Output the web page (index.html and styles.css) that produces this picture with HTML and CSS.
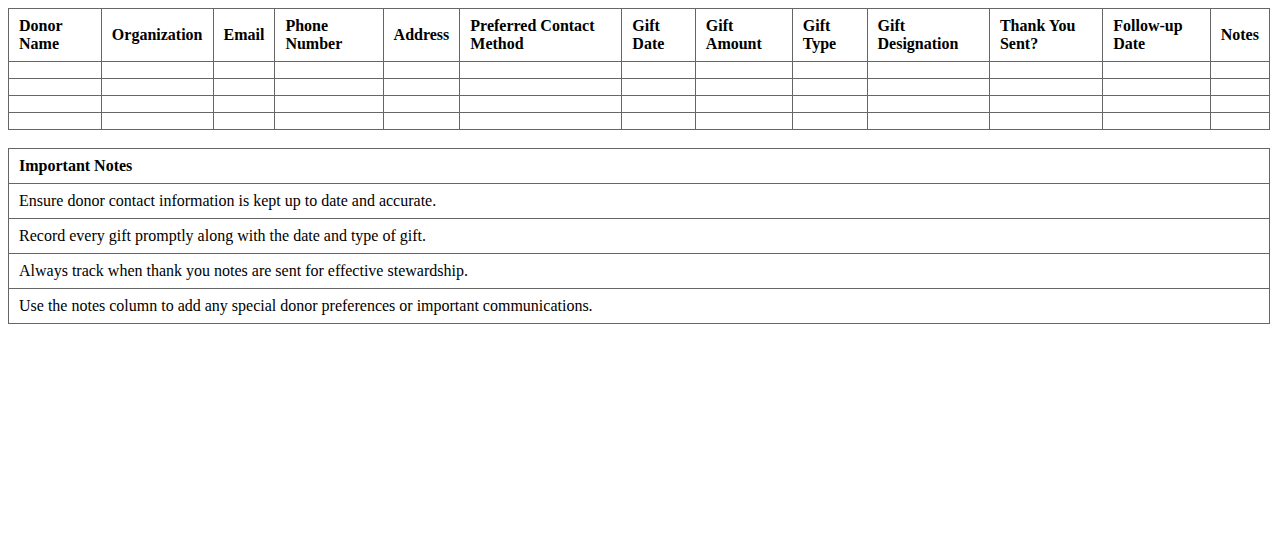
FILE: index.html
```html
<!DOCTYPE html>
<html>
<head>
<meta charset="utf-8">
<link rel="stylesheet" href="styles.css">
</head>
<body>
<table class="log">
  <thead>
    <tr>
      <th>Donor Name</th>
      <th>Organization</th>
      <th>Email</th>
      <th>Phone Number</th>
      <th>Address</th>
      <th>Preferred Contact Method</th>
      <th>Gift Date</th>
      <th>Gift Amount</th>
      <th>Gift Type</th>
      <th>Gift Designation</th>
      <th>Thank You Sent?</th>
      <th>Follow-up Date</th>
      <th>Notes</th>
    </tr>
  </thead>
  <tbody>
    <tr><td></td><td></td><td></td><td></td><td></td><td></td><td></td><td></td><td></td><td></td><td></td><td></td><td></td></tr>
    <tr><td></td><td></td><td></td><td></td><td></td><td></td><td></td><td></td><td></td><td></td><td></td><td></td><td></td></tr>
    <tr><td></td><td></td><td></td><td></td><td></td><td></td><td></td><td></td><td></td><td></td><td></td><td></td><td></td></tr>
    <tr><td></td><td></td><td></td><td></td><td></td><td></td><td></td><td></td><td></td><td></td><td></td><td></td><td></td></tr>
  </tbody>
</table>
<table class="notes">
  <tr><th>Important Notes</th></tr>
  <tr><td>Ensure donor contact information is kept up to date and accurate.</td></tr>
  <tr><td>Record every gift promptly along with the date and type of gift.</td></tr>
  <tr><td>Always track when thank you notes are sent for effective stewardship.</td></tr>
  <tr><td>Use the notes column to add any special donor preferences or important communications.</td></tr>
</table>
</body>
</html>
```
FILE: styles.css
```css
body {
  margin: 8px;
  font-family: "Liberation Serif", "Times New Roman", serif;
  font-size: 16px;
  color: #000;
  background: #fff;
}
table {
  width: 100%;
  border-collapse: collapse;
}
th, td {
  border: 1px solid #666;
  padding: 8px 10px;
  text-align: left;
}
th {
  font-weight: bold;
}
.notes {
  margin-top: 18px;
}
```
